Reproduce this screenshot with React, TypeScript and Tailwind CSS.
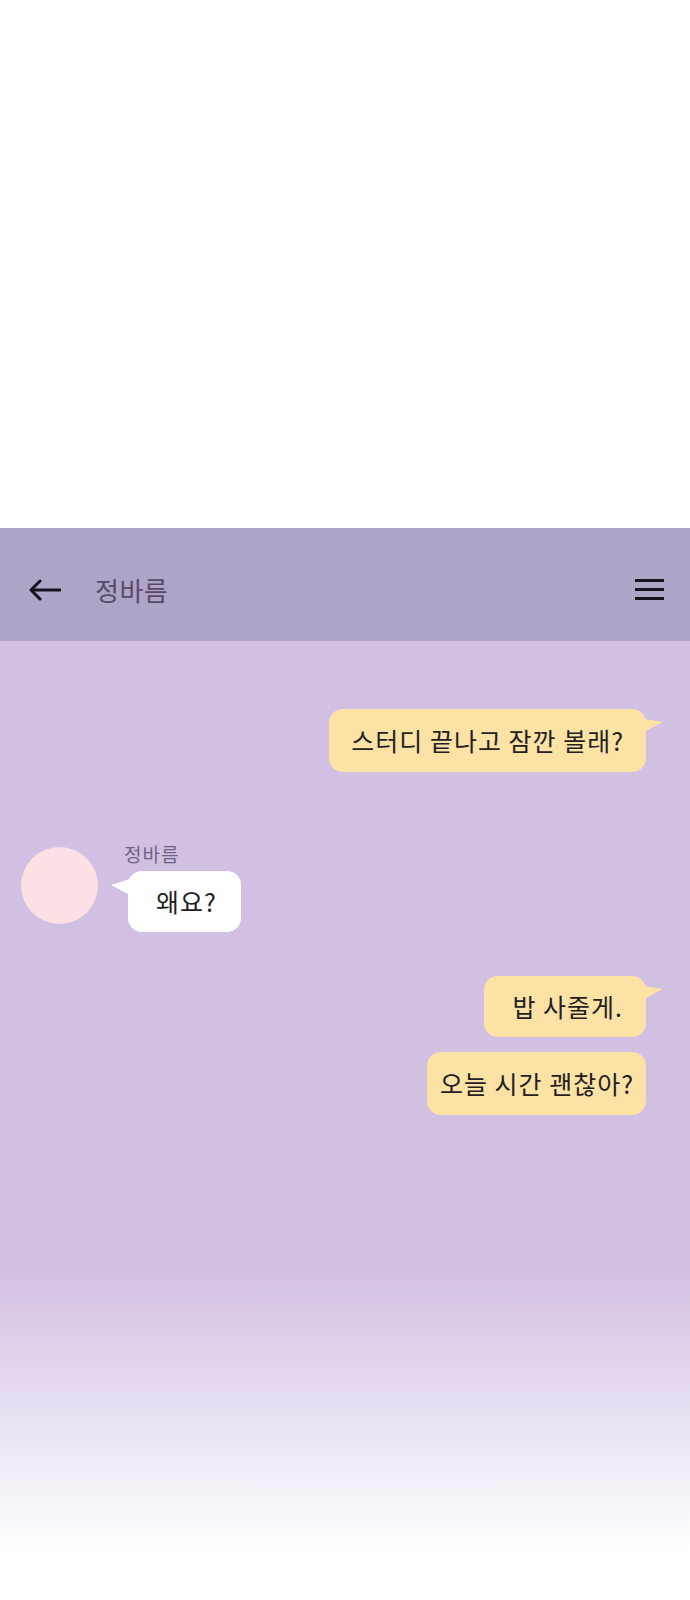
import React from "react";

const font = { fontFamily: '"Noto Sans CJK KR", "Noto Sans", sans-serif' };

function TailRight() {
  return (
    <svg className="absolute right-[-18px] top-[8px]" width="20" height="18" viewBox="0 0 20 18">
      <path d="M0 2 L19 5 L0 15 Z" fill="#fde2a6" />
    </svg>
  );
}

function TailLeft() {
  return (
    <svg className="absolute left-[-18px] top-[6px]" width="20" height="20" viewBox="0 0 20 20">
      <path d="M20 2 L1 8 L20 18 Z" fill="#ffffff" />
    </svg>
  );
}

function MyBubble({ text, tail, className }: { text: string; tail?: boolean; className?: string }) {
  return (
    <div
      className={
        "relative self-end rounded-[14px] bg-[#fde2a6] text-[25px] leading-[33px] tracking-[1px] text-[#222] " +
        (className ?? "")
      }
    >
      {text}
      {tail && <TailRight />}
    </div>
  );
}

export default function App() {
  return (
    <div className="flex h-[1600px] w-[690px] flex-col bg-white" style={font}>
      <div className="h-[528px] shrink-0" />

      <header className="flex h-[113px] shrink-0 items-center bg-[#afa4c6] pl-[29px] pr-[26px] pt-[10px]">
        <svg width="32" height="22" viewBox="0 0 32 22" fill="none" stroke="#16121f" strokeWidth="3" strokeLinecap="round" strokeLinejoin="round">
          <path d="M31 11 H3" />
          <path d="M11 2 L2 11 L11 20" />
        </svg>
        <div className="ml-[34px] text-[26px] leading-[32px] tracking-[0.5px] text-[#564a69]">정바름</div>
        <div className="ml-auto flex w-[29px] flex-col gap-[6px]">
          <div className="h-[3px] bg-[#16121f]" />
          <div className="h-[3px] bg-[#16121f]" />
          <div className="h-[3px] bg-[#16121f]" />
        </div>
      </header>

      <main className="flex h-[629px] shrink-0 flex-col bg-[#d2c0e2] pl-[21px] pr-[44px] pt-[68px]">
        <MyBubble text="스터디 끝나고 잠깐 볼래?" tail className="py-[15px] pl-[22px] pr-[22px]" />

        <div className="mt-[70px] flex">
          <div className="mt-[5px] h-[77px] w-[77px] shrink-0 rounded-full bg-[#fde0e6]" />
          <div className="ml-[26px] flex flex-col items-start">
            <div className="text-[19px] leading-[24px] tracking-[1px] text-[#6f6284]">정바름</div>
            <div className="relative ml-[4px] mt-[5px] rounded-[14px] bg-white py-[15px] pl-[28px] pr-[24px] text-[25px] leading-[31px] tracking-[1px] text-[#222]">
              왜요?
              <TailLeft />
            </div>
          </div>
        </div>

        <MyBubble text="밥 사줄게." tail className="mt-[44px] py-[14px] pl-[28px] pr-[23px]" />
        <MyBubble text="오늘 시간 괜찮아?" className="mt-[15px] py-[15px] pl-[13px] pr-[12px]" />
      </main>

      <div className="h-[280px] shrink-0 bg-gradient-to-b from-[#d2c0e2] to-white" />
      <div className="flex-1 bg-white" />
    </div>
  );
}
